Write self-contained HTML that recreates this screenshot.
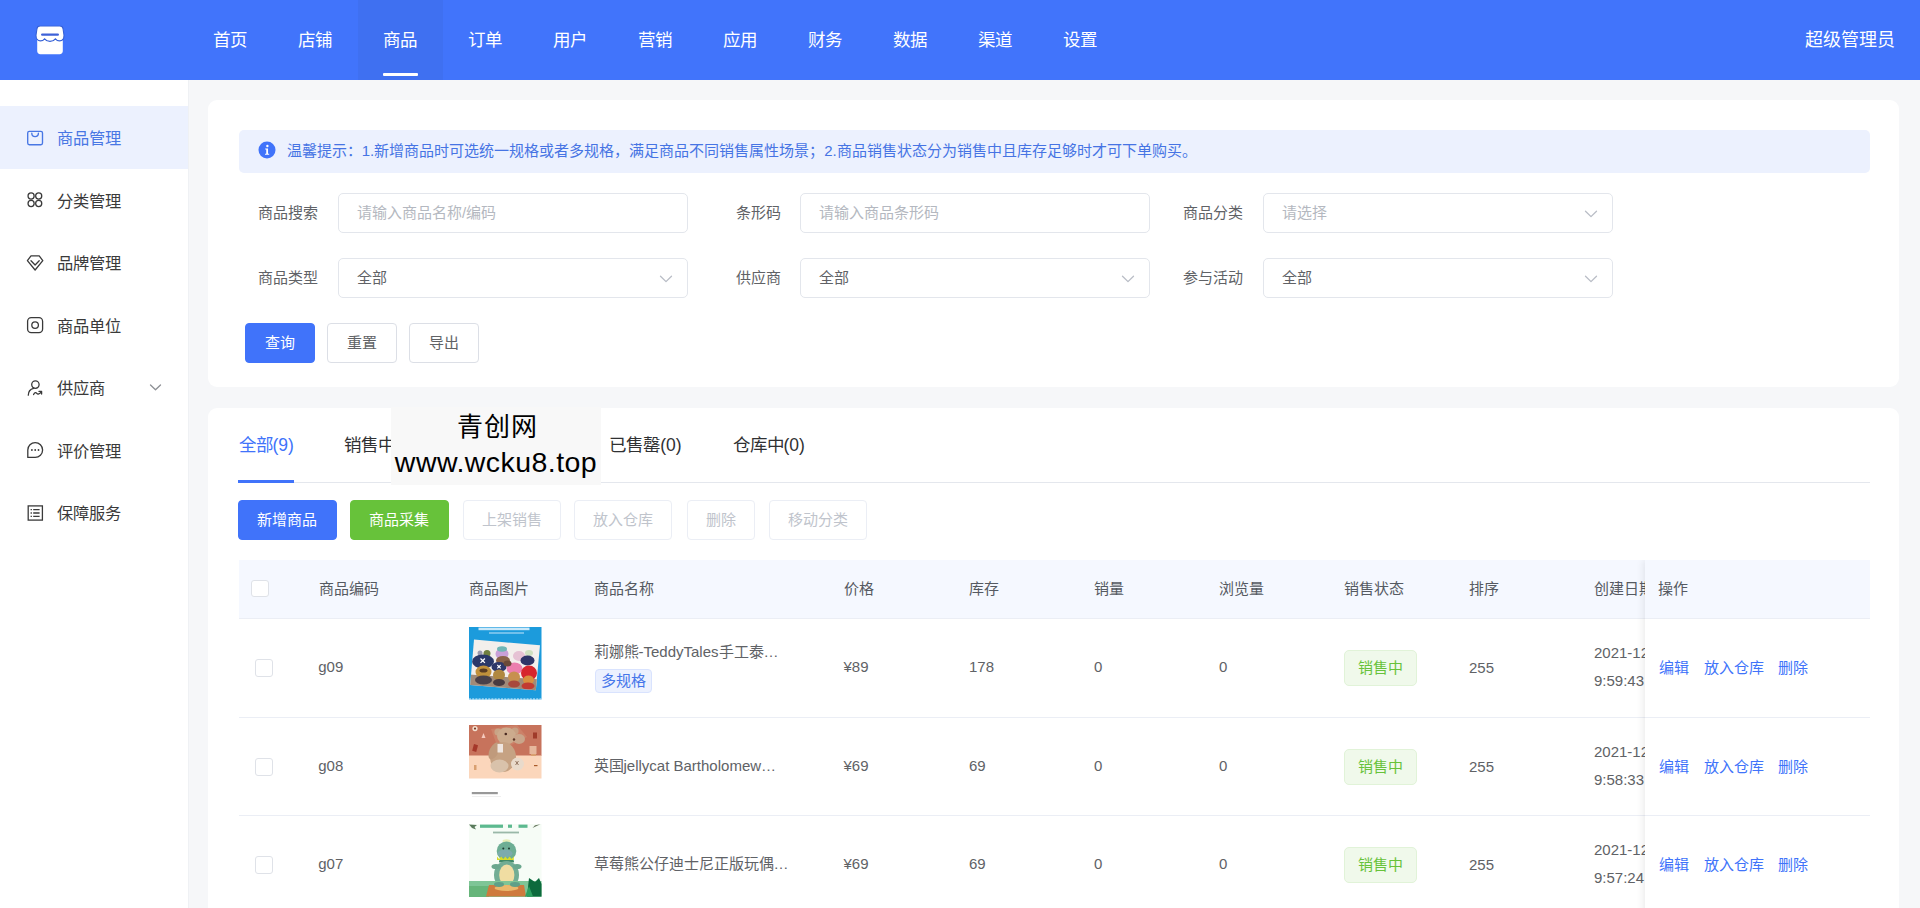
<!DOCTYPE html>
<html lang="zh-CN">
<head>
<meta charset="utf-8">
<title>商品管理</title>
<style>
*{box-sizing:border-box;margin:0;padding:0}
html,body{width:1920px;height:908px;overflow:hidden;background:#f6f7f9}
body{font-family:"Liberation Sans",sans-serif;color:#606266;position:relative;font-size:15px}
.abs{position:absolute}
/* header */
#hd{position:absolute;left:0;top:0;width:1920px;height:80px;background:#4174fb}
#hd .nav{position:absolute;top:0;height:80px;width:85px;text-align:center;line-height:80px;color:#fff;font-size:17.5px}
#hd .nav.on{background:#3f70f1}
#hd .nav.on:after{content:"";position:absolute;left:25.5px;width:35px;top:72.5px;height:3px;background:#fff;border-radius:1px}
#hd .user{position:absolute;right:25px;top:0;line-height:80px;color:#fff;font-size:18px}
/* sidebar */
#sb{position:absolute;left:0;top:80px;width:189px;height:828px;background:#fff;border-right:1px solid #eff1f4}
#sb .it{position:absolute;left:0;width:188px;height:62.5px;line-height:62.5px;font-size:16.25px;color:#3a3a3a}
#sb .it span{position:absolute;left:57px;top:1px}
#sb .it svg{position:absolute;left:25px;top:21.5px;width:20px;height:20px}
#sb .it.on{background:#ecf1fe;color:#4877e4}
/* cards */
.card{position:absolute;background:#fff;border-radius:9px}
.lbl{position:absolute;font-size:15px;color:#606266;line-height:40px;height:40px;text-align:right;white-space:nowrap}
.inp{position:absolute;width:350px;height:40px;border:1px solid #e3e6ec;border-radius:5px;background:#fff;font-size:15px;line-height:38px;padding-left:18px;color:#606266}
.inp.ph{color:#b4b8c0}
.inp svg{position:absolute;right:14px;top:13px;width:14px;height:14px}
.btn{position:absolute;height:40px;line-height:38px;border:1px solid #dcdfe6;border-radius:4px;background:#fff;color:#606266;font-size:15px;text-align:center;white-space:nowrap}
.btn.pri{background:#4073fa;border-color:#4073fa;color:#fff}
.btn.suc{background:#67c23a;border-color:#67c23a;color:#fff}
.btn.dis{border-color:#ebeef5;color:#c0c4cc}
.tab{position:absolute;top:27px;font-size:17.5px;line-height:20px;color:#303133;white-space:nowrap}
.tab.on{color:#4073fa}
/* table */
#tb{position:absolute;left:31px;top:152.5px;width:1631px;height:400px;overflow:hidden}
.th{position:absolute;top:0;height:59px;line-height:57px;font-size:15px;color:#555a62;white-space:nowrap}
.row{position:absolute;left:0;width:1631.25px;height:98px;border-bottom:1px solid #ebeef5}
.c{position:absolute;font-size:15px;line-height:28.75px;color:#606266;white-space:nowrap}
.ck{position:absolute;width:17.5px;height:17.5px;border:1px solid #dfe2e8;border-radius:3px;background:#fff}
.tagb{position:absolute;left:356px;top:50px;height:24px;line-height:22px;padding:0 5px;font-size:15px;color:#4576ea;background:#ecf1fe;border:1px solid #d9e3fe;border-radius:4px}
.tagg{position:absolute;left:1105px;top:31px;width:72.5px;height:36px;line-height:34px;text-align:center;font-size:15px;color:#67c23a;background:#f0f9eb;border:1px solid #e1f3d8;border-radius:5px}
.img{position:absolute;left:230px;top:8px;width:72.5px;height:72.5px;overflow:hidden}
#fx{position:absolute;right:0;top:0;width:225px;height:400px;background:#fff;box-shadow:-2px 0 7px rgba(0,0,0,.08)}
#fx .fh{position:absolute;left:0;top:0;width:225px;height:59px;border-bottom:1px solid #ebeef5;background:#f5f8ff;line-height:57px;font-size:15px;color:#555a62;padding-left:12.5px}
#fx .fr{position:absolute;left:0;width:225px;height:98px;border-bottom:1px solid #ebeef5}
#fx .fr a{position:absolute;top:35px;font-size:15px;line-height:28.75px;color:#4073fa;white-space:nowrap}
#wm{position:absolute;left:391px;top:407px;width:210px;height:78px;background:#f8f8f8;color:#000;text-align:center}
</style>
</head>
<body>
<div id="hd">
  <svg class="abs" style="left:35px;top:25px;width:30px;height:30px" viewBox="0 0 30 30">
    <path d="M2.2 15 H27.8 V26 C27.8 28 26.6 29.2 24.6 29.2 H5.4 C3.4 29.2 2.2 28 2.2 26 Z" fill="#fff"/>
    <path d="M5.2 .9 H24.8 C26.6 .9 27.6 1.9 28 3.5 L29 10.2 C29 13.6 27.2 15.9 24.6 15.9 C22.8 15.9 21.4 15.1 20.4 13.8 C19.2 15.4 17.3 16.4 15 16.4 C12.7 16.4 10.8 15.4 9.6 13.8 C8.6 15.1 7.2 15.9 5.4 15.9 C2.8 15.9 1 13.6 1 10.2 L2 3.5 C2.4 1.9 3.4 .9 5.2 .9 Z" fill="#fff" stroke="#3560d6" stroke-width="1.1"/>
    <rect x="-1" y="-1" width="32" height="1.6" fill="#4174fb"/>
    <rect x="6" y="8.4" width="18" height="2.4" rx="1.2" fill="#3e62d8"/>
  </svg>
  <div class="nav" style="left:187.5px">首页</div>
  <div class="nav" style="left:272.5px">店铺</div>
  <div class="nav on" style="left:357.5px">商品</div>
  <div class="nav" style="left:442.5px">订单</div>
  <div class="nav" style="left:527.5px">用户</div>
  <div class="nav" style="left:612.5px">营销</div>
  <div class="nav" style="left:697.5px">应用</div>
  <div class="nav" style="left:782.5px">财务</div>
  <div class="nav" style="left:867.5px">数据</div>
  <div class="nav" style="left:952.5px">渠道</div>
  <div class="nav" style="left:1037.5px">设置</div>
  <div class="user">超级管理员</div>
</div>

<div id="sb">
  <div class="it on" style="top:26.25px"><svg viewBox="0 0 20 20" fill="none" stroke="currentColor" stroke-width="1.35" stroke-linejoin="round" stroke-linecap="round"><rect x="2.7" y="3.3" width="14.8" height="13.4" rx="1.6"/><path d="M6.8 5.2 C6.8 9.8 13.4 9.8 13.4 5.2"/></svg><span>商品管理</span></div>
  <div class="it" style="top:88.75px"><svg viewBox="0 0 20 20" fill="none" stroke="currentColor" stroke-width="1.3"><circle cx="6.1" cy="6" r="3.05"/><circle cx="13.7" cy="6" r="3.05"/><circle cx="6.1" cy="13.5" r="3.05"/><circle cx="13.7" cy="13.5" r="3.05"/></svg><span>分类管理</span></div>
  <div class="it" style="top:151.25px"><svg viewBox="0 0 20 20" fill="none" stroke="currentColor" stroke-width="1.3" stroke-linejoin="round" stroke-linecap="round"><path d="M6 2.8 H14.2 L17.8 7.6 L10.1 17 L2.4 7.6 Z"/><path d="M6 7.8 L10.1 12 L14.2 7.8"/></svg><span>品牌管理</span></div>
  <div class="it" style="top:213.75px"><svg viewBox="0 0 20 20" fill="none" stroke="currentColor" stroke-width="1.3"><rect x="2.6" y="2.6" width="15" height="15" rx="3.6"/><circle cx="10.1" cy="10.1" r="3.3"/></svg><span>商品单位</span></div>
  <div class="it" style="top:276.25px"><svg viewBox="0 0 20 20" fill="none" stroke="currentColor" stroke-width="1.3" stroke-linecap="round" stroke-linejoin="round"><circle cx="10.4" cy="6.6" r="3.7"/><path d="M3.3 17.2 C3.3 13.4 5.6 11 8.6 10.3"/><path d="M8.6 16.6 C9.6 14.2 11 14.4 11.8 15.4 C12.8 16.6 14.4 16.2 16.4 13.6 M16.6 16 V13.4 H14"/></svg><span>供应商</span><svg style="left:148.5px;top:25px;width:13px;height:13px" viewBox="0 0 13 13" fill="none" stroke="#8d9095" stroke-width="1.3" stroke-linecap="round" stroke-linejoin="round"><path d="M1.5 4 L6.5 8.8 L11.5 4"/></svg></div>
  <div class="it" style="top:338.75px"><svg viewBox="0 0 20 20" fill="none" stroke="currentColor" stroke-width="1.3" stroke-linejoin="round"><path d="M10.2 2.6 A7.4 7.4 0 1 1 10.2 17.4 H2.8 V10 A7.4 7.4 0 0 1 10.2 2.6 Z"/><g fill="currentColor" stroke="none"><circle cx="6.9" cy="10" r=".9"/><circle cx="10.2" cy="10" r=".9"/><circle cx="13.5" cy="10" r=".9"/></g></svg><span>评价管理</span></div>
  <div class="it" style="top:401.25px"><svg viewBox="0 0 20 20" fill="none" stroke="currentColor" stroke-width="1.3"><rect x="3.2" y="2.9" width="14.2" height="14.2"/><path d="M8.2 6.6 H14.6 M8.2 10 H14.6 M8.2 13.4 H14.6" stroke-width="1.4"/><path d="M5.6 6.6 H6.9 M5.6 10 H6.9 M5.6 13.4 H6.9" stroke-width="1.4"/></svg><span>保障服务</span></div>
</div>

<div class="card" id="c1" style="left:208px;top:100px;width:1691px;height:287px">
  <div class="abs" style="left:31px;top:30px;width:1631px;height:42.5px;background:#ecf1fe;border-radius:5px"></div>
  <svg class="abs" style="left:50px;top:41px;width:18px;height:18px" viewBox="0 0 19 19"><circle cx="9.5" cy="9.5" r="9" fill="#4073fa"/><circle cx="9.9" cy="5.3" r="1.25" fill="#fff"/><path d="M7.6 8 H10.6 V13.4 H11.8 V14.4 H7.4 V13.4 H8.7 V9 H7.6 Z" fill="#fff"/></svg>
  <div class="abs" style="left:78.75px;top:40px;font-size:15px;line-height:22.5px;color:#4674e4;white-space:nowrap">温馨提示：1.新增商品时可选统一规格或者多规格，满足商品不同销售属性场景；2.商品销售状态分为销售中且库存足够时才可下单购买。</div>

  <div class="lbl" style="left:10px;width:100px;top:93px">商品搜索</div>
  <div class="inp ph" style="left:130px;top:93px">请输入商品名称/编码</div>
  <div class="lbl" style="left:472.5px;width:100px;top:93px">条形码</div>
  <div class="inp ph" style="left:592.25px;top:93px">请输入商品条形码</div>
  <div class="lbl" style="left:935px;width:100px;top:93px">商品分类</div>
  <div class="inp ph" style="left:1055px;top:93px">请选择<svg viewBox="0 0 14 14" fill="none" stroke="#b9bdc6" stroke-width="1.3" stroke-linecap="round" stroke-linejoin="round"><path d="M1.5 4.2 L7 9.6 L12.5 4.2"/></svg></div>

  <div class="lbl" style="left:10px;width:100px;top:158px">商品类型</div>
  <div class="inp" style="left:130px;top:158px">全部<svg viewBox="0 0 14 14" fill="none" stroke="#b9bdc6" stroke-width="1.3" stroke-linecap="round" stroke-linejoin="round"><path d="M1.5 4.2 L7 9.6 L12.5 4.2"/></svg></div>
  <div class="lbl" style="left:472.5px;width:100px;top:158px">供应商</div>
  <div class="inp" style="left:592.25px;top:158px">全部<svg viewBox="0 0 14 14" fill="none" stroke="#b9bdc6" stroke-width="1.3" stroke-linecap="round" stroke-linejoin="round"><path d="M1.5 4.2 L7 9.6 L12.5 4.2"/></svg></div>
  <div class="lbl" style="left:935px;width:100px;top:158px">参与活动</div>
  <div class="inp" style="left:1055px;top:158px">全部<svg viewBox="0 0 14 14" fill="none" stroke="#b9bdc6" stroke-width="1.3" stroke-linecap="round" stroke-linejoin="round"><path d="M1.5 4.2 L7 9.6 L12.5 4.2"/></svg></div>

  <div class="btn pri" style="left:36.5px;top:223px;width:70px">查询</div>
  <div class="btn" style="left:119.25px;top:223px;width:69.5px">重置</div>
  <div class="btn" style="left:201px;top:223px;width:69.5px">导出</div>
</div>

<div class="card" id="c2" style="left:208px;top:407.5px;width:1691px;height:520px">
  <div class="tab on" style="left:30.5px">全部(9)</div>
  <div class="tab" style="left:135.8px">销售中(9)</div>
  <div class="tab" style="left:259.5px">库存预警(0)</div>
  <div class="tab" style="left:401.3px">已售罄(0)</div>
  <div class="tab" style="left:524.5px">仓库中(0)</div>
  <div class="abs" style="left:31px;top:74px;width:1631px;height:1.5px;background:#e4e7ed"></div>
  <div class="abs" style="left:29.5px;top:72.5px;width:56px;height:3px;background:#4073fa"></div>

  <div class="btn pri" style="left:30px;top:92.5px;width:98.5px">新增商品</div>
  <div class="btn suc" style="left:142px;top:92.5px;width:98.5px">商品采集</div>
  <div class="btn dis" style="left:254.5px;top:92.5px;width:98px">上架销售</div>
  <div class="btn dis" style="left:366px;top:92.5px;width:98px">放入仓库</div>
  <div class="btn dis" style="left:478.5px;top:92.5px;width:68px">删除</div>
  <div class="btn dis" style="left:560.5px;top:92.5px;width:98px">移动分类</div>

  <div id="tb">
    <div class="abs" style="left:0;top:0;width:1631.25px;height:59px;background:#f5f8ff;border-bottom:1px solid #ebeef5"></div>
    <div class="ck" style="left:12px;top:19.5px"></div>
    <div class="th" style="left:80.0px">商品编码</div><div class="th" style="left:230.0px">商品图片</div><div class="th" style="left:355.0px">商品名称</div><div class="th" style="left:605.0px">价格</div><div class="th" style="left:730.0px">库存</div><div class="th" style="left:855.0px">销量</div><div class="th" style="left:980.0px">浏览量</div><div class="th" style="left:1105.0px">销售状态</div><div class="th" style="left:1230.0px">排序</div><div class="th" style="left:1355.0px">创建日期</div>
    
    <div class="row" style="top:59px;height:99px">
      <div class="ck" style="left:16.25px;top:40px"></div>
      <div class="c" style="left:79.25px;top:34px">g09</div>
      <div class="img"><svg width="72.5" height="72.5" viewBox="0 0 72.5 72.5"><defs><filter id="b1" x="-10%" y="-10%" width="120%" height="120%"><feGaussianBlur stdDeviation=".7"/></filter><clipPath id="p1"><path d="M5 12.6 L71 18.3 L66.8 63.2 L1.2 58 Z"/></clipPath></defs>
<rect width="72.5" height="72.5" fill="#1c9bdc"/>
<rect x="9.5" y=".6" width="51" height="2.6" fill="#e8f6ff" opacity=".85" filter="url(#b1)"/><rect x="20" y="5.2" width="35" height="1.6" fill="#9fd6f5" opacity=".8"/>
<path d="M5 12.6 L71 18.3 L66.8 63.2 L1.2 58 Z" fill="#f3efec"/>
<g clip-path="url(#p1)" filter="url(#b1)">
<rect x="0" y="50" width="72" height="12" fill="#a08a78" transform="rotate(4 36 54)"/>
<ellipse cx="33" cy="27" rx="6.5" ry="5.5" fill="#c9a0d8"/><ellipse cx="33" cy="22" rx="5" ry="2.8" fill="#6fb6b6"/>
<ellipse cx="50" cy="29" rx="6" ry="5" fill="#e6c2d4"/><ellipse cx="60" cy="26" rx="4" ry="3" fill="#cfe0c0"/>
<ellipse cx="18" cy="26.5" rx="3.5" ry="3.5" fill="#6f7f40"/><ellipse cx="11" cy="26" rx="2.5" ry="2.5" fill="#9a9ab0"/>
<ellipse cx="58.5" cy="33.5" rx="7" ry="5" fill="#2d3568"/>
<ellipse cx="34" cy="33.5" rx="7" ry="4.5" fill="#8a6448"/>
<ellipse cx="14" cy="34.5" rx="11" ry="7" fill="#2c3769"/><path d="M11.5 31.5 l4.4 4.4 m0 -4.4 l-4.4 4.4" stroke="#fff" stroke-width="1.3"/>
<ellipse cx="14.5" cy="45" rx="8" ry="6.5" fill="#c0903a"/><ellipse cx="14.5" cy="43.5" rx="4" ry="2" fill="#5a3a20"/><ellipse cx="14.5" cy="53" rx="8.5" ry="4.5" fill="#4a4048"/>
<ellipse cx="30" cy="40" rx="7.5" ry="5" fill="#2d376a"/><path d="M28.3 38 l3.4 3.4 m0 -3.4 l-3.4 3.4" stroke="#fff" stroke-width="1.1"/>
<ellipse cx="30" cy="48" rx="6" ry="5.5" fill="#b08840"/><ellipse cx="30" cy="55.5" rx="6" ry="3.5" fill="#4a3a40"/>
<ellipse cx="45.5" cy="41.5" rx="8" ry="6" fill="#ec7fae"/><ellipse cx="45" cy="50" rx="6" ry="5.5" fill="#c79050"/><ellipse cx="45" cy="57" rx="6" ry="3.5" fill="#a84a3c"/>
<ellipse cx="60" cy="46" rx="8" ry="7.5" fill="#d6262d"/><ellipse cx="59.5" cy="53" rx="5.5" ry="4.5" fill="#d89040"/><ellipse cx="59" cy="59" rx="6.5" ry="3.5" fill="#c23a30"/>
<ellipse cx="38.5" cy="36.5" rx="4" ry="3" fill="#6a4a38"/>
</g>
<path d="M0 72 H72.5" stroke="#d8f0ff" stroke-width="1.2" stroke-dasharray="2 1.2"/>
</svg></div>
      <div class="c" style="left:354.5px;top:19px">莉娜熊-TeddyTales手工泰…</div>
      <div class="tagb">多规格</div>
      <div class="c" style="left:604.5px;top:34px">¥89</div>
      <div class="c" style="left:730.0px;top:34px">178</div>
      <div class="c" style="left:855.0px;top:34px">0</div>
      <div class="c" style="left:980.0px;top:34px">0</div>
      <div class="tagg">销售中</div>
      <div class="c" style="left:1230.0px;top:35px">255</div>
      <div class="c" style="left:1355.0px;top:19.5px">2021-12-23 0</div>
      <div class="c" style="left:1355.0px;top:47.5px">9:59:43</div>
    </div>
    <div class="row" style="top:158px">
      <div class="ck" style="left:16.25px;top:40px"></div>
      <div class="c" style="left:79.25px;top:34px">g08</div>
      <div class="img" style="top:7px"><svg width="72.5" height="72.5" viewBox="0 0 72.5 72.5"><defs><filter id="b2" x="-10%" y="-10%" width="120%" height="120%"><feGaussianBlur stdDeviation=".5"/></filter></defs>
<rect width="72.5" height="72.5" fill="#fff"/>
<rect width="72.5" height="31" fill="#c7735c"/><rect y="30.5" width="72.5" height="23" fill="#fbd6bb"/>
<g filter="url(#b2)">
<path d="M22 4 L48 0 L58 12 L30 26 Z" fill="#cf8a70" opacity=".6"/>
<rect x="4" y="19.5" width="4.2" height="7" fill="#a5382b" transform="rotate(15 6 23)"/><rect x="64" y="7.5" width="4" height="6" fill="#a03a2a"/>
<circle cx="6" cy="3.6" r="2.6" fill="#f3e2d2"/><circle cx="6" cy="3.6" r="1.1" fill="#7a3a28"/>
<path d="M12.5 13 l2 -5 l2 5 z" fill="#f5c9bd"/>
<rect x="60.5" y="21" width="7" height="8" fill="#e6b79c"/><rect x="62" y="29" width="5" height="2" fill="#d9a070"/>
<rect x="5" y="40" width="2.5" height="5" fill="#d9a070"/><rect x="65" y="40" width="3.5" height="1.2" fill="#a85a2a"/>
<ellipse cx="29" cy="7" rx="3.6" ry="3.6" fill="#c9a486"/><ellipse cx="46" cy="6" rx="3.6" ry="3.6" fill="#c7a083"/>
<ellipse cx="37.5" cy="11" rx="9.5" ry="8.5" fill="#ccab8d"/>
<ellipse cx="50" cy="14" rx="6" ry="5" fill="#c9a58a"/>
<ellipse cx="34" cy="32" rx="13" ry="15" fill="#c6a283"/>
<ellipse cx="25" cy="26" rx="4.5" ry="9" fill="#c09a7b" transform="rotate(25 25 26)"/>
<ellipse cx="30.5" cy="41" rx="9" ry="6.5" fill="#d9c2ab"/>
<ellipse cx="48.5" cy="39" rx="6.5" ry="6.5" fill="#e9dacb"/>
<rect x="28.5" y="19" width="5.5" height="8.5" fill="#efe6e0"/>
<circle cx="36.8" cy="9" r="1.3" fill="#4a2a20"/><circle cx="45" cy="14.5" r="1.2" fill="#5a3426"/>
<path d="M46.5 36 l3 4 m0 -4 l-3 4" stroke="#8a6a55" stroke-width=".9"/>
</g>
<rect x="2.8" y="67" width="26" height="2.2" fill="#444" opacity=".55" filter="url(#b2)"/><rect x="3" y="71" width="29" height="1" fill="#e4e4e4" opacity=".6"/>
</svg></div>
      <div class="c" style="left:354.5px;top:34px">英国jellycat Bartholomew…</div>
      
      <div class="c" style="left:604.5px;top:34px">¥69</div>
      <div class="c" style="left:730.0px;top:34px">69</div>
      <div class="c" style="left:855.0px;top:34px">0</div>
      <div class="c" style="left:980.0px;top:34px">0</div>
      <div class="tagg">销售中</div>
      <div class="c" style="left:1230.0px;top:35px">255</div>
      <div class="c" style="left:1355.0px;top:19.5px">2021-12-23 0</div>
      <div class="c" style="left:1355.0px;top:47.5px">9:58:33</div>
    </div>
    <div class="row" style="top:256px">
      <div class="ck" style="left:16.25px;top:40px"></div>
      <div class="c" style="left:79.25px;top:34px">g07</div>
      <div class="img"><svg width="72.5" height="72.5" viewBox="0 0 72.5 72.5"><defs><filter id="b3" x="-10%" y="-10%" width="120%" height="120%"><feGaussianBlur stdDeviation=".5"/></filter></defs>
<rect width="72.5" height="72.5" fill="#f6fcf6"/>
<g filter="url(#b3)">
<path d="M0 .5 L8 1 L5.5 3 L7 5.5 L3 4 Z" fill="#5a7a5c"/><path d="M63.5 4 L71.5 .3 L66 1.2 Z" fill="#6a7a62"/>
<rect x="11" y=".6" width="23" height="3.2" fill="#5cb98f"/><rect x="39" y=".6" width="4" height="3.2" fill="#5cb98f"/><rect x="49.5" y=".6" width="9" height="3.2" fill="#5cb98f"/>
<rect x="24" y="7.6" width="26" height="1.8" fill="#9ab8a8"/>
<ellipse cx="37.5" cy="17" rx="4" ry="1.8" fill="#e6eeb8"/>
<ellipse cx="37.5" cy="27" rx="9.8" ry="9.5" fill="#6dae94"/>
<ellipse cx="36" cy="29.5" rx="7.5" ry="4" fill="#86aac0" opacity=".55"/>
<path d="M28 32.5 l2.1 2.6 l2.1 -2.6 l2.1 2.6 l2.1 -2.6 l2.1 2.6 l2.1 -2.6 l2.1 2.6 l2.1 -2.6 v3.6 h-16.8 z" fill="#d8dc2c"/>
<rect x="30" y="36" width="15" height="2.6" rx="1.2" fill="#3f8a68"/>
<ellipse cx="37.5" cy="51" rx="12.5" ry="14" fill="#72ad94"/>
<ellipse cx="27" cy="42.5" rx="4.5" ry="2.6" fill="#6aa78e"/><ellipse cx="48" cy="42.5" rx="4.5" ry="2.6" fill="#6aa78e"/>
<ellipse cx="37.8" cy="51" rx="7.6" ry="10.5" fill="#f0dda2"/>
<circle cx="34.3" cy="24.5" r="1" fill="#1e3a30"/><circle cx="40" cy="24.5" r="1" fill="#1e3a30"/>
<rect x="0" y="57" width="72.5" height="16" fill="#7ec596"/>
<rect x="0" y="62" width="20" height="11" fill="#66b57a"/>
<path d="M17 72.5 L20 61 L55 61 L57 72.5 Z" fill="#cf7a3e"/>
<ellipse cx="37.5" cy="64" rx="12" ry="3" fill="#eab86c"/>
<ellipse cx="30" cy="60.5" rx="5" ry="2.4" fill="#5f9f88"/><ellipse cx="46" cy="60.5" rx="5" ry="2.4" fill="#5f9f88"/>
<path d="M58 72.5 L60 54 L66 58 L70 54 L72.5 60 V72.5 Z" fill="#0c6a3c"/>
<path d="M56 72.5 L60 62 L64 72.5 Z" fill="#2fa060"/>
</g>
</svg></div>
      <div class="c" style="left:354.5px;top:34px">草莓熊公仔迪士尼正版玩偶…</div>
      
      <div class="c" style="left:604.5px;top:34px">¥69</div>
      <div class="c" style="left:730.0px;top:34px">69</div>
      <div class="c" style="left:855.0px;top:34px">0</div>
      <div class="c" style="left:980.0px;top:34px">0</div>
      <div class="tagg">销售中</div>
      <div class="c" style="left:1230.0px;top:35px">255</div>
      <div class="c" style="left:1355.0px;top:19.5px">2021-12-23 0</div>
      <div class="c" style="left:1355.0px;top:47.5px">9:57:24</div>
    </div>
    <div id="fx"><div class="fh">操作</div><div class="fr" style="top:59px;height:99px"><a style="left:14px">编辑</a><a style="left:58.5px">放入仓库</a><a style="left:133px">删除</a></div><div class="fr" style="top:158px"><a style="left:14px">编辑</a><a style="left:58.5px">放入仓库</a><a style="left:133px">删除</a></div><div class="fr" style="top:256px"><a style="left:14px">编辑</a><a style="left:58.5px">放入仓库</a><a style="left:133px">删除</a></div></div>
  </div>
</div>

<div id="wm">
  <div class="abs" style="left:0;width:210px;top:1.5px;padding-left:2px;font-size:26px;letter-spacing:1px;line-height:36px">青创网</div>
  <div class="abs" style="left:0;width:210px;top:37px;font-size:28.5px;letter-spacing:.45px;line-height:36px">www.wcku8.top</div>
</div>
</body>
</html>
